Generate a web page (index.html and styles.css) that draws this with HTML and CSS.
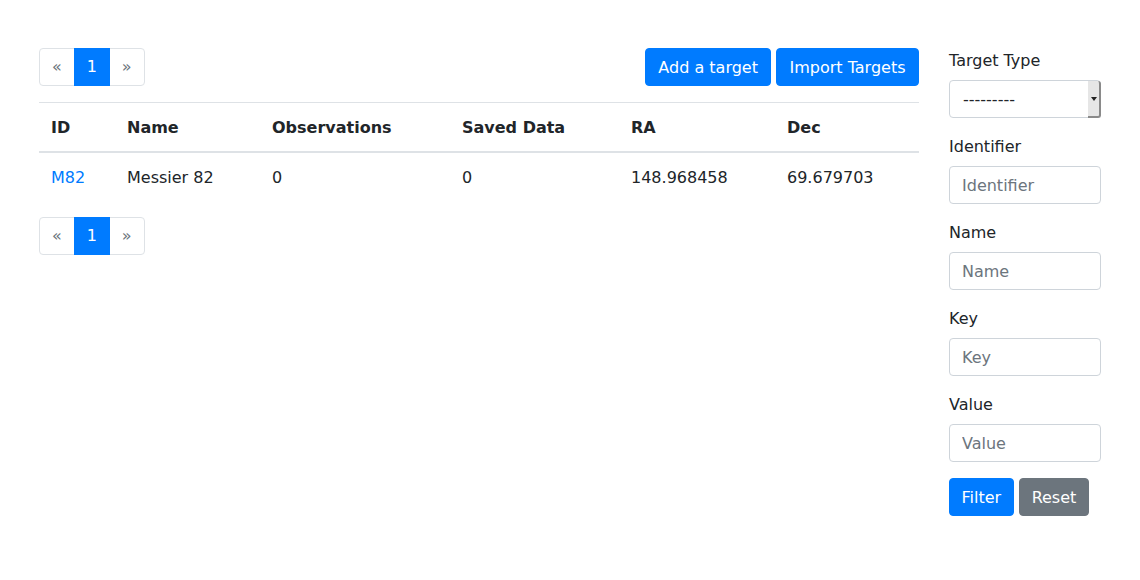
FILE: index.html
```html
<!DOCTYPE html>
<html>
<head>
<meta charset="utf-8">
<link rel="stylesheet" href="styles.css">
</head>
<body>
<div class="page">
  <main class="main">
    <div class="toolbar">
      <ul class="pagination">
        <li><a class="page-link" href="#">&laquo;</a></li>
        <li><a class="page-link active" href="#">1</a></li>
        <li><a class="page-link" href="#">&raquo;</a></li>
      </ul>
      <div class="actions">
        <a class="btn btn-primary" href="#">Add a target</a>
        <a class="btn btn-primary btn-import" href="#">Import Targets</a>
      </div>
    </div>
    <table class="table">
      <thead>
        <tr>
          <th class="c-id">ID</th>
          <th class="c-name">Name</th>
          <th class="c-obs">Observations</th>
          <th class="c-saved">Saved Data</th>
          <th class="c-ra">RA</th>
          <th class="c-dec">Dec</th>
        </tr>
      </thead>
      <tbody>
        <tr>
          <td><a class="link" href="#">M82</a></td>
          <td>Messier 82</td>
          <td>0</td>
          <td>0</td>
          <td>148.968458</td>
          <td>69.679703</td>
        </tr>
      </tbody>
    </table>
    <ul class="pagination">
      <li><a class="page-link" href="#">&laquo;</a></li>
      <li><a class="page-link active" href="#">1</a></li>
      <li><a class="page-link" href="#">&raquo;</a></li>
    </ul>
  </main>
  <aside class="sidebar">
    <form>
      <div class="form-group">
        <label>Target Type</label>
        <div class="select-wrap">
          <select class="form-control select">
            <option>---------</option>
          </select>
          <span class="select-arrow"><span class="caret"></span></span>
        </div>
      </div>
      <div class="form-group">
        <label>Identifier</label>
        <input class="form-control" type="text" placeholder="Identifier">
      </div>
      <div class="form-group">
        <label>Name</label>
        <input class="form-control" type="text" placeholder="Name">
      </div>
      <div class="form-group">
        <label>Key</label>
        <input class="form-control" type="text" placeholder="Key">
      </div>
      <div class="form-group">
        <label>Value</label>
        <input class="form-control" type="text" placeholder="Value">
      </div>
      <div class="form-buttons">
        <button class="btn btn-primary btn-filter" type="button">Filter</button>
        <button class="btn btn-secondary" type="button">Reset</button>
      </div>
    </form>
  </aside>
</div>
</body>
</html>
```

FILE: styles.css
```css
* { box-sizing: border-box; }
html, body {
  margin: 0;
  padding: 0;
  background: #fff;
}
body {
  font-family: "DejaVu Sans", sans-serif;
  font-size: 16px;
  line-height: 1.5;
  color: #212529;
}
.page {
  display: flex;
  gap: 30px;
  padding: 48px 0 0 39px;
}
.main {
  width: 880px;
  flex: none;
}
.toolbar {
  display: flex;
  justify-content: space-between;
  align-items: flex-start;
  margin-bottom: 16px;
}
.pagination {
  display: flex;
  list-style: none;
  margin: 0;
  padding: 0;
}
.page-link {
  display: block;
  padding: 8px 12px;
  line-height: 20px;
  color: #007bff;
  text-decoration: none;
  border: 1px solid #dee2e6;
  margin-left: -1px;
  background: #fff;
}
.pagination li:first-child .page-link {
  margin-left: 0;
  border-radius: 4px 0 0 4px;
  color: #6c757d;
}
.pagination li:last-child .page-link {
  border-radius: 0 4px 4px 0;
  color: #6c757d;
}
.page-link.active {
  background: #007bff;
  border-color: #007bff;
  color: #fff;
  position: relative;
  z-index: 1;
  width: 36px;
  text-align: center;
  padding-left: 0;
  padding-right: 0;
}
.actions {
  display: flex;
  gap: 5px;
}
.btn {
  display: inline-block;
  font-family: "DejaVu Sans", sans-serif;
  font-size: 16px;
  line-height: 24px;
  padding: 7px 12px 5px;
  border: 1px solid transparent;
  border-radius: 4px;
  text-decoration: none;
  cursor: pointer;
}
.btn-import {
  padding-left: 12.5px;
  padding-right: 12.5px;
}
.btn-primary {
  background: #007bff;
  border-color: #007bff;
  color: #fff;
}
.btn-secondary {
  background: #6c757d;
  border-color: #6c757d;
  color: #fff;
}
.table {
  width: 100%;
  border-collapse: collapse;
  margin-bottom: 16px;
  table-layout: fixed;
}
.table th, .table td {
  padding: 13px 12px 11px;
  text-align: left;
  vertical-align: top;
  border-top: 1px solid #dee2e6;
}
.table th {
  font-weight: bold;
  border-bottom: 2px solid #dee2e6;
}
.table td {
  border-top: 0;
}
.c-id { width: 76px; }
.c-name { width: 145px; }
.c-obs { width: 190px; }
.c-saved { width: 169px; }
.c-ra { width: 156px; }
.c-dec { width: 144px; }
.link {
  color: #007bff;
  text-decoration: none;
}
.sidebar {
  width: 152px;
  flex: none;
}
form { margin: 0; }
.form-group {
  margin-bottom: 16px;
}
label {
  display: block;
  padding-top: 1px;
  margin-bottom: 7px;
}
.form-control {
  display: block;
  width: 100%;
  height: 38px;
  padding: 6px 12px;
  font-family: "DejaVu Sans", sans-serif;
  font-size: 16px;
  line-height: 24px;
  color: #495057;
  background: #fff;
  border: 1px solid #ced4da;
  border-radius: 4px;
  margin: 0;
}
.form-control::placeholder {
  color: #6c757d;
  opacity: 1;
}
.select-wrap {
  position: relative;
}
.select {
  appearance: none;
  -webkit-appearance: none;
  color: #212529;
  padding-left: 13px;
  padding-top: 7px;
  padding-bottom: 5px;
}
.select-arrow {
  position: absolute;
  top: 1px;
  right: 0;
  width: 13px;
  height: 37px;
  background: #e6e6e6;
  border-right: 2px solid #8a8a8a;
  border-bottom: 2px solid #8a8a8a;
  border-radius: 0 3px 3px 0;
  display: flex;
  align-items: center;
  justify-content: center;
}
.caret {
  width: 0;
  height: 0;
  border-left: 3px solid transparent;
  border-right: 3px solid transparent;
  border-top: 4px solid #222;
}
.form-buttons {
  display: flex;
  gap: 5px;
}
.form-buttons .btn-filter {
  padding-left: 11.5px;
  padding-right: 11.5px;
}
```
